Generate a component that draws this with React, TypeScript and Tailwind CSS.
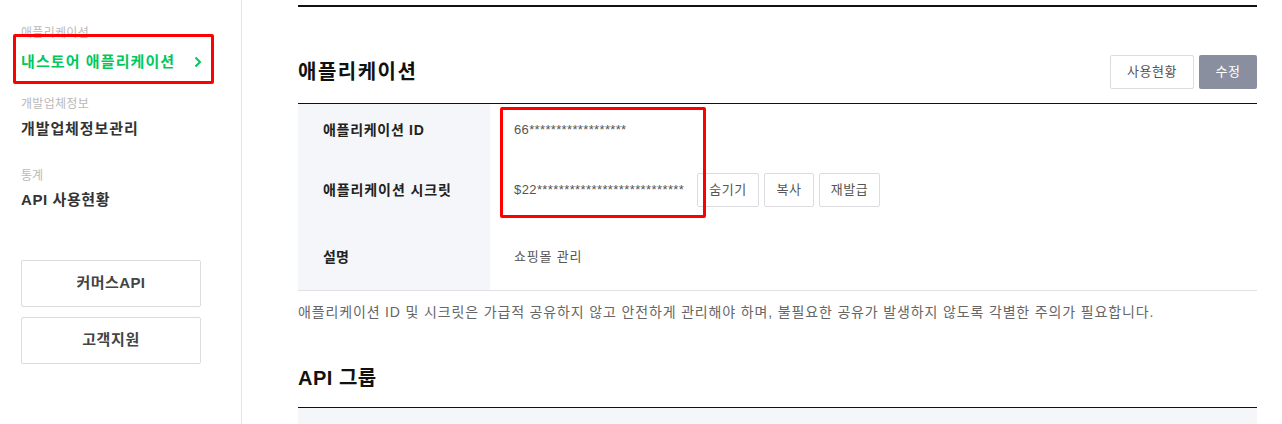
import React from "react";

const font = { fontFamily: '"Liberation Sans", "Noto Sans CJK KR", sans-serif' };

export default function App() {
  return (
    <div className="relative flex w-[1282px] h-[424px] overflow-hidden bg-white text-[#222]" style={font}>
      {/* Sidebar */}
      <aside className="w-[242px] shrink-0 border-r border-[#e5e5e5] pl-[21px] pt-[26px]">
        <div className="text-[12px] leading-[15px] text-[#b9b9b9] tracking-[0.3px]">애플리케이션</div>
        <div className="mt-[11px] flex items-center w-[181px] justify-between text-[15px] leading-[20px] font-bold text-[#03c75a]">
          <span className="tracking-[1.1px]">내스토어 애플리케이션</span>
          <svg width="8" height="12" viewBox="0 0 8 12">
            <path d="M1.5 1.5 L6 6 L1.5 10.5" fill="none" stroke="#03c75a" strokeWidth="2" />
          </svg>
        </div>
        <div className="mt-[25px] text-[12px] leading-[15px] text-[#b9b9b9] tracking-[0.3px]">개발업체정보</div>
        <div className="mt-[7px] text-[15px] leading-[20px] font-semibold text-[#333] tracking-[0.9px]">개발업체정보관리</div>
        <div className="mt-[30px] text-[12px] leading-[15px] text-[#b9b9b9]">통계</div>
        <div className="mt-[6px] text-[15px] leading-[20px] font-semibold text-[#333] tracking-[0.6px]">API 사용현황</div>
        <div className="mt-[50px] flex flex-col gap-[10px] w-[180px]">
          <div className="h-[47px] flex items-center justify-center border border-[#dcdce0] rounded-[2px] text-[15px] font-bold text-[#444] tracking-[0.4px]">커머스API</div>
          <div className="h-[47px] flex items-center justify-center border border-[#dcdce0] rounded-[2px] text-[15px] font-bold text-[#444] tracking-[0.6px]">고객지원</div>
        </div>
      </aside>

      {/* Main */}
      <main className="flex-1 pl-[56px] pr-[25px] pt-[5px]">
        <div className="h-[2px] bg-[#111]" />
        <div className="mt-[48px] flex items-center justify-between h-[34px]">
          <h2 className="text-[20px] font-bold text-[#111] tracking-[1.5px]">애플리케이션</h2>
          <div className="flex gap-[5px]">
            <button className="w-[84px] h-[34px] border border-[#dcdce0] rounded-[2px] bg-white text-[13px] text-[#555] tracking-[0.5px]">사용현황</button>
            <button className="w-[58px] h-[34px] rounded-[2px] bg-[#8a8fa0] text-[13px] text-white tracking-[0.5px]">수정</button>
          </div>
        </div>
        <div className="mt-[14px] border-t border-[#111] border-b border-b-[#e1e1e5]">
          <div className="flex h-[52px]">
            <div className="w-[192px] bg-[#f4f6f9] flex items-center pl-[25px] text-[14px] font-bold tracking-[0.7px]">애플리케이션 ID</div>
            <div className="flex items-center pl-[24px] text-[13px] text-[#555] tracking-[0.35px]">66******************</div>
          </div>
          <div className="flex h-[68px]">
            <div className="w-[192px] bg-[#f4f6f9] flex items-center pl-[25px] text-[14px] font-bold tracking-[0.9px]">애플리케이션 시크릿</div>
            <div className="flex items-center pl-[24px] text-[13px] text-[#555]">
              <span className="w-[183px] tracking-[0.4px]">$22***************************</span>
              <div className="flex gap-[5px]">
                <button className="w-[62px] h-[34px] border border-[#dcdce0] rounded-[2px] bg-white text-[13px] text-[#555] tracking-[0.5px]">숨기기</button>
                <button className="w-[50px] h-[34px] border border-[#dcdce0] rounded-[2px] bg-white text-[13px] text-[#555] tracking-[0.5px]">복사</button>
                <button className="w-[61px] h-[34px] border border-[#dcdce0] rounded-[2px] bg-white text-[13px] text-[#555] tracking-[0.5px]">재발급</button>
              </div>
            </div>
          </div>
          <div className="flex h-[66px]">
            <div className="w-[192px] bg-[#f4f6f9] flex items-center pl-[25px] text-[14px] font-bold">설명</div>
            <div className="flex items-center pl-[24px] text-[13px] text-[#555] tracking-[0.8px]">쇼핑몰 관리</div>
          </div>
        </div>
        <p className="mt-[11px] text-[14px] leading-[20px] text-[#666] tracking-[0.85px] whitespace-nowrap">
          애플리케이션 ID 및 시크릿은 가급적 공유하지 않고 안전하게 관리해야 하며, 불필요한 공유가 발생하지 않도록 각별한 주의가 필요합니다.
        </p>
        <h2 className="mt-[44px] text-[20px] leading-[24px] font-bold text-[#111] tracking-[0.5px]">API 그룹</h2>
        <div className="mt-[17px] border-t border-[#111] h-[20px] bg-[#f4f6f9]" />
      </main>

      {/* Red annotation boxes */}
      <div className="absolute left-[13px] top-[34px] w-[201px] h-[50px] border-[3px] border-[#ff0000] rounded-[2px]" />
      <div className="absolute left-[500px] top-[107px] w-[206px] h-[111px] border-[3px] border-[#ff0000] rounded-[2px]" />
    </div>
  );
}
